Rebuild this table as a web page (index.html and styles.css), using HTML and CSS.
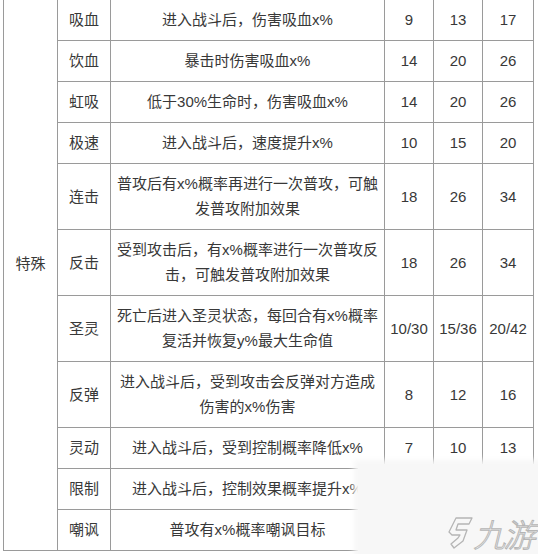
FILE: index.html
```html
<!DOCTYPE html>
<html lang="zh">
<head>
<meta charset="utf-8">
<link rel="stylesheet" href="styles.css">
</head>
<body>
<div class="page">
<table class="skills">
<colgroup>
<col class="c-cat"><col class="c-name"><col class="c-desc"><col class="c-v"><col class="c-v"><col class="c-v3">
</colgroup>
<tbody>
<tr><td class="cat" rowspan="11">特殊</td><td>吸血</td><td>进入战斗后，伤害吸血x%</td><td>9</td><td>13</td><td>17</td></tr>
<tr><td>饮血</td><td>暴击时伤害吸血x%</td><td>14</td><td>20</td><td>26</td></tr>
<tr><td>虹吸</td><td>低于30%生命时，伤害吸血x%</td><td>14</td><td>20</td><td>26</td></tr>
<tr><td>极速</td><td>进入战斗后，速度提升x%</td><td>10</td><td>15</td><td>20</td></tr>
<tr><td>连击</td><td>普攻后有x%概率再进行一次普攻，可触发普攻附加效果</td><td>18</td><td>26</td><td>34</td></tr>
<tr><td>反击</td><td>受到攻击后，有x%概率进行一次普攻反击，可触发普攻附加效果</td><td>18</td><td>26</td><td>34</td></tr>
<tr><td>圣灵</td><td>死亡后进入圣灵状态，每回合有x%概率复活并恢复y%最大生命值</td><td>10/30</td><td>15/36</td><td>20/42</td></tr>
<tr><td>反弹</td><td>进入战斗后，受到攻击会反弹对方造成伤害的x%伤害</td><td>8</td><td>12</td><td>16</td></tr>
<tr><td>灵动</td><td>进入战斗后，受到控制概率降低x%</td><td>7</td><td>10</td><td>13</td></tr>
<tr><td>限制</td><td>进入战斗后，控制效果概率提升x%</td><td></td><td></td><td></td></tr>
<tr><td>嘲讽</td><td>普攻有x%概率嘲讽目标</td><td></td><td></td><td></td></tr>
</tbody>
</table>
<div class="watermark">
<svg class="wm-logo" width="28" height="34" viewBox="0 0 28 34" fill="none" stroke="#b5b5b5" stroke-width="1.3" stroke-linejoin="round">
<path d="M10 2 L26 2 L23 8 L12 8 L10 14 L21 14 L17 25 L8 32 L5 28 L12 22 L14 19 L6 19 L3 16 Z"/>
</svg>
<span class="wm-text">九游</span>
</div>
</div>
</body>
</html>
```
FILE: styles.css
```css
html, body {
  margin: 0;
  padding: 0;
  background: #ffffff;
}
.page {
  position: relative;
  width: 538px;
  height: 554px;
  overflow: hidden;
  padding-left: 3px;
  box-sizing: border-box;
}
.skills {
  border-collapse: collapse;
  table-layout: fixed;
  width: 531px;
  margin-top: -1px;
  font-family: "Liberation Sans", "Noto Sans CJK SC", sans-serif;
  font-size: 15px;
  color: #383838;
}
.c-cat { width: 54px; }
.c-name { width: 53px; }
.c-desc { width: 274px; }
.c-v { width: 49px; }
.c-v3 { width: 51px; }
.skills td {
  border: 1px solid #9a9a9a;
  text-align: center;
  vertical-align: middle;
  line-height: 25px;
  padding: 7px 5px 8px;
  height: 25px;
}
.skills td.cat {
  padding-bottom: 30px;
}
.watermark {
  position: absolute;
  left: 358px;
  top: 464px;
  width: 190px;
  height: 100px;
  background: #f7f7f7;
  box-shadow: 0 0 6px 4px #f7f7f7;
  display: flex;
  align-items: center;
  padding: 38px 0 0 88px;
  box-sizing: border-box;
  gap: 3px;
}
.wm-text {
  font-family: "Noto Sans CJK SC", sans-serif;
  font-size: 32px;
  font-weight: 300;
  color: transparent;
  -webkit-text-stroke: 1px #b5b5b5;
  letter-spacing: -2px;
  transform: skewX(-14deg);
  display: inline-block;
}
```
